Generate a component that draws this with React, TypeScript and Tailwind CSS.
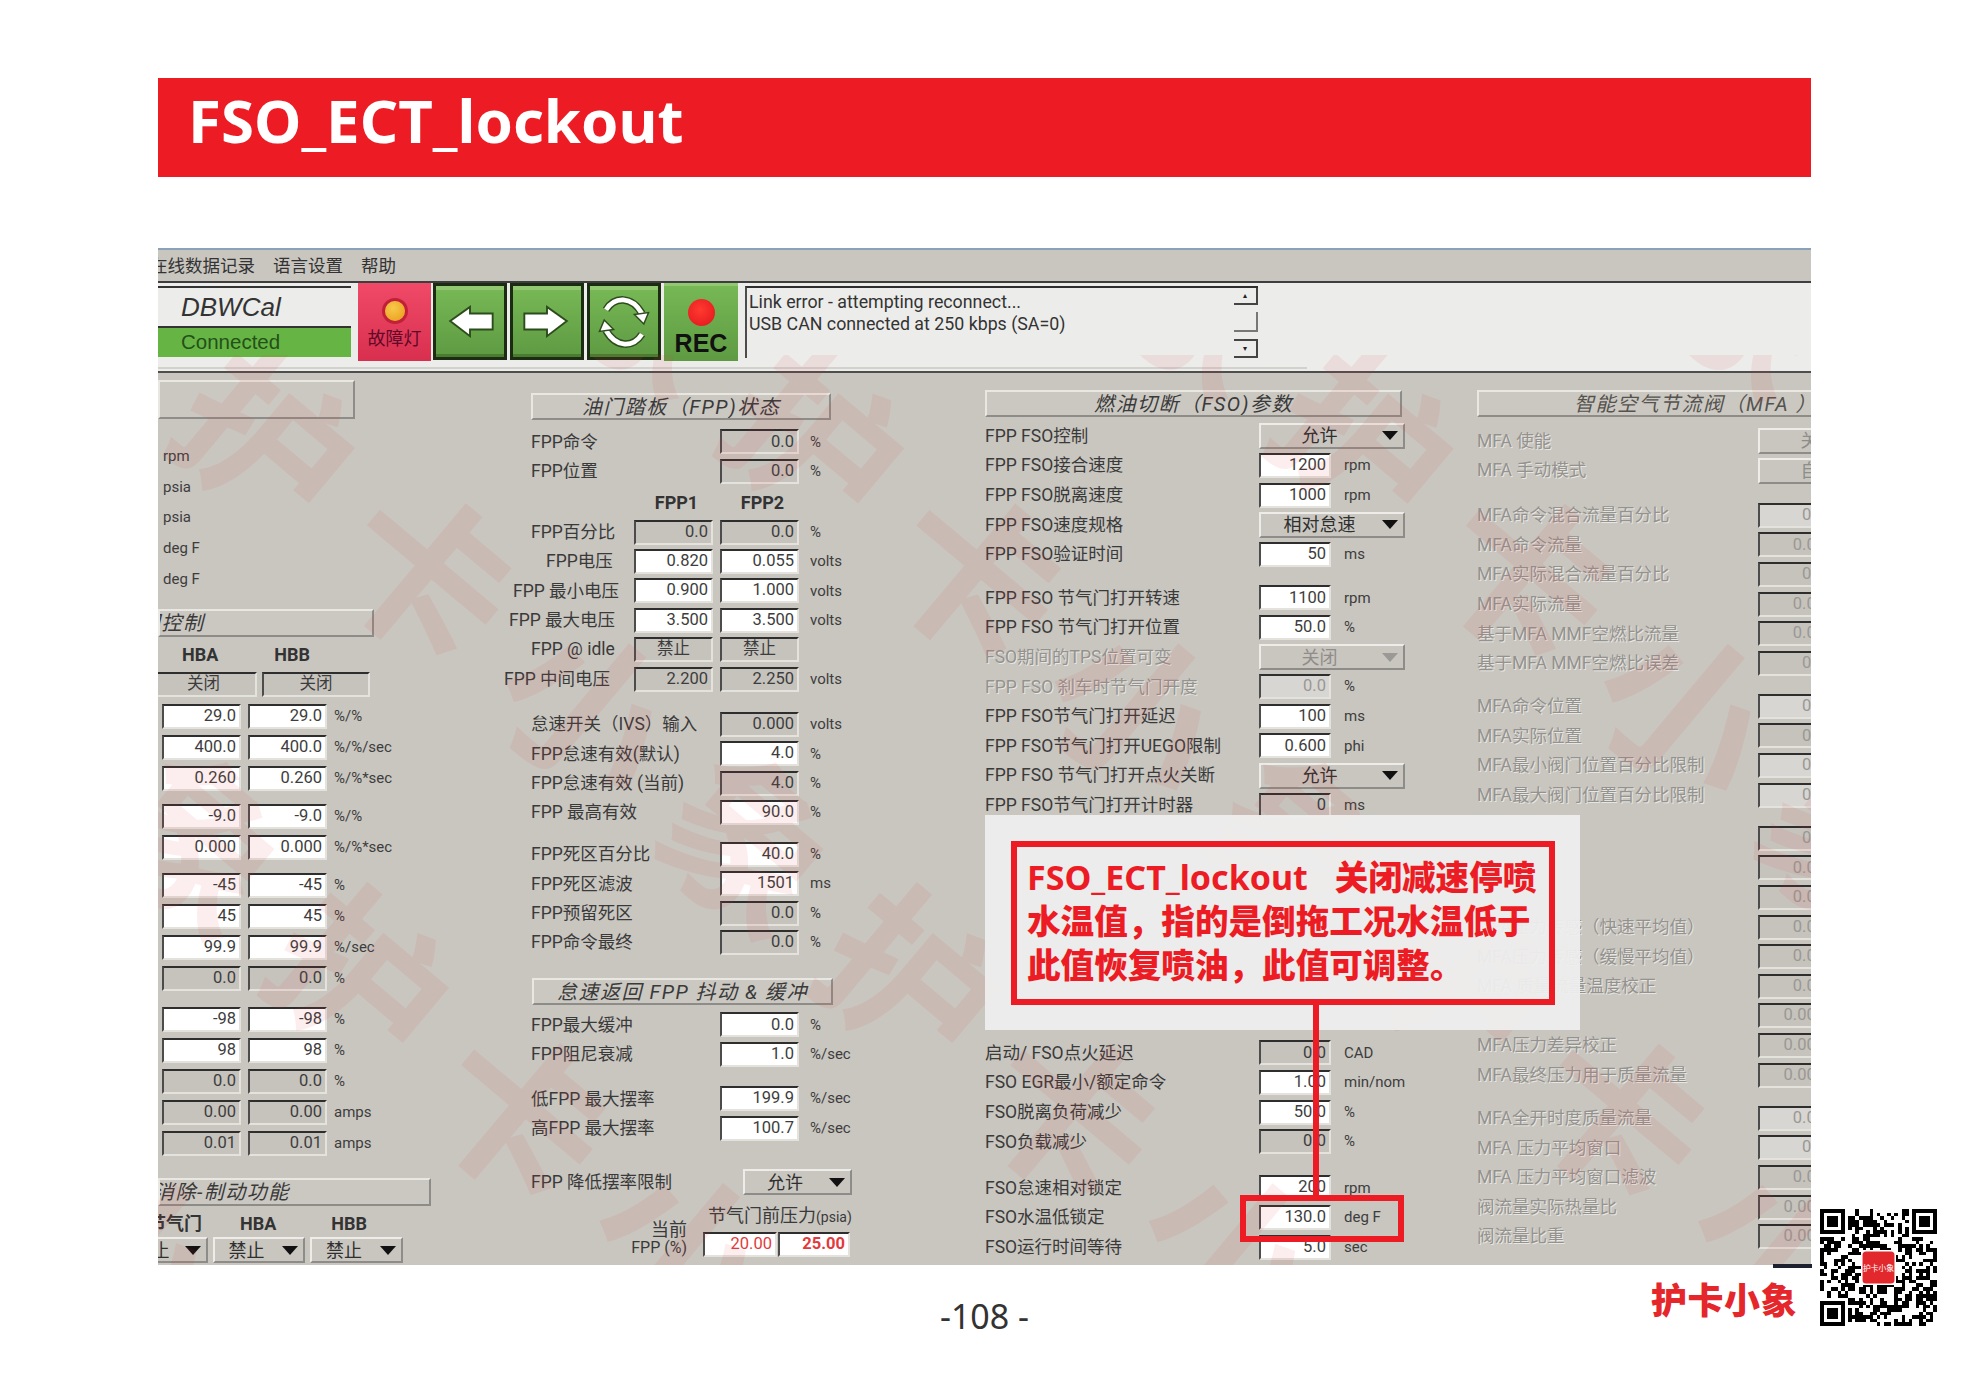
import React from "react";

type Cell = { label?: string; value?: string; unit?: string; ro?: boolean; light?: boolean; pick?: string; off?: boolean; gap?: string };

function Arrow({ off }: { off?: boolean }) {
	return (
		<svg viewBox="0 0 16 9" className="h-[9px] w-[16px] shrink-0">
			<polygon points="0,0 16,0 8,9" fill={off ? "#9b9995" : "#111"} />
		</svg>
	);
}

function Field({ value, ro, light, w = "w-[79px]", center, red, bold }: { value: React.ReactNode; ro?: boolean; light?: boolean; w?: string; center?: boolean; red?: boolean; bold?: boolean }) {
	return (
		<div
			className={`flex h-[25px] shrink-0 items-center overflow-hidden border-2 border-t-[#2e2e2e] border-r-[#e4e2dd] border-b-[#e4e2dd] border-l-[#4c4c4c] text-[16.5px] ${w} ${center ? "justify-center" : "justify-end pr-[3px]"} ${ro ? "bg-[#c6c3bd]" : light ? "bg-[#d8d6d2]" : "bg-white"} ${red ? "text-[#e23a3c]" : "text-[#3d3d3d]"} ${bold ? "font-bold" : ""}`}
		>
			{value}
		</div>
	);
}

function Pick({ value, w = "w-[146px]", off, extra = "" }: { value: string; w?: string; off?: boolean; extra?: string }) {
	return (
		<div
			className={`flex h-[26px] shrink-0 items-center overflow-hidden border-2 border-t-[#eeece8] border-r-[#8e8c88] border-b-[#8e8c88] border-l-[#eeece8] bg-[#c9c6c0] pr-[5px] text-[18px] ${w} ${extra} ${off ? "text-[#8f8d89]" : "text-[#2f2f2f]"}`}
		>
			<span className="flex-1 text-center whitespace-nowrap">{value}</span>
			<span className="w-[4px]" />
			<Arrow off={off} />
		</div>
	);
}

function Title({ children, extra }: { children: React.ReactNode; extra: string }) {
	return (
		<div
			className={`flex shrink-0 items-center overflow-hidden border-2 border-t-[#e9e7e2] border-r-[#8e8c88] border-b-[#8e8c88] border-l-[#e9e7e2] bg-[#cbc8c2] text-[20px] tracking-[1.5px] whitespace-nowrap text-[#3a3a3a] italic ${extra}`}
		>
			{children}
		</div>
	);
}

const hbRows: { a: string; u?: string; ro?: boolean; gap?: string }[] = [
	{ a: "29.0", u: "%/%", gap: "mt-[3.5px]" },
	{ a: "400.0", u: "%/%/sec" },
	{ a: "0.260", u: "%/%*sec" },
	{ a: "-9.0", u: "%/%", gap: "mt-[7px]" },
	{ a: "0.000", u: "%/%*sec" },
	{ a: "-45", u: "%", gap: "mt-[7px]" },
	{ a: "45", u: "%" },
	{ a: "99.9", u: "%/sec" },
	{ a: "0.0", u: "%", ro: true },
	{ a: "-98", u: "%", gap: "mt-[10px]" },
	{ a: "98", u: "%" },
	{ a: "0.0", u: "%", ro: true },
	{ a: "0.00", u: "amps", ro: true },
	{ a: "0.01", u: "amps", ro: true },
];

const fppRows: { label: string; pad: string; a: string; b: string; u?: string; ro?: boolean; text?: boolean }[] = [
	{ label: "FPP百分比", pad: "pl-[27px]", a: "0.0", b: "0.0", u: "%", ro: true },
	{ label: "FPP电压", pad: "pl-[42px]", a: "0.820", b: "0.055", u: "volts" },
	{ label: "FPP 最小电压", pad: "pl-[9px]", a: "0.900", b: "1.000", u: "volts" },
	{ label: "FPP 最大电压", pad: "pl-[5px]", a: "3.500", b: "3.500", u: "volts" },
	{ label: "FPP @ idle", pad: "pl-[27px]", a: "禁止", b: "禁止", ro: true, text: true },
	{ label: "FPP 中间电压", pad: "pl-0", a: "2.200", b: "2.250", u: "volts", ro: true },
];

const idleRows: Cell[] = [
	{ label: "怠速开关（IVS）输入", value: "0.000", unit: "volts", ro: true, gap: "mt-[16px]" },
	{ label: "FPP怠速有效(默认)", value: "4.0", unit: "%" },
	{ label: "FPP怠速有效 (当前)", value: "4.0", unit: "%", ro: true },
	{ label: "FPP 最高有效", value: "90.0", unit: "%" },
	{ label: "FPP死区百分比", value: "40.0", unit: "%", gap: "mt-[12.4px]" },
	{ label: "FPP死区滤波", value: "1501", unit: "ms" },
	{ label: "FPP预留死区", value: "0.0", unit: "%", ro: true },
	{ label: "FPP命令最终", value: "0.0", unit: "%", ro: true },
];

const fsoTop: Cell[] = [
	{ label: "FPP FSO控制", pick: "允许", gap: "mt-[4.2px]" },
	{ label: "FPP FSO接合速度", value: "1200", unit: "rpm" },
	{ label: "FPP FSO脱离速度", value: "1000", unit: "rpm" },
	{ label: "FPP FSO速度规格", pick: "相对怠速" },
	{ label: "FPP FSO验证时间", value: "50", unit: "ms" },
	{ label: "FPP FSO 节气门打开转速", value: "1100", unit: "rpm", gap: "mt-[14px]" },
	{ label: "FPP FSO 节气门打开位置", value: "50.0", unit: "%" },
	{ label: "FSO期间的TPS位置可变", pick: "关闭", off: true },
	{ label: "FPP FSO 刹车时节气门开度", value: "0.0", unit: "%", off: true, light: true },
	{ label: "FPP FSO节气门打开延迟", value: "100", unit: "ms" },
	{ label: "FPP FSO节气门打开UEGO限制", value: "0.600", unit: "phi" },
	{ label: "FPP FSO 节气门打开点火关断", pick: "允许" },
	{ label: "FPP FSO节气门打开计时器", value: "0", unit: "ms", ro: true },
];

const fsoBottom: Cell[] = [
	{ label: "启动/ FSO点火延迟", value: "0.0", unit: "CAD", ro: true, gap: "mt-[218.2px]" },
	{ label: "FSO EGR最小/额定命令", value: "1.00", unit: "min/nom" },
	{ label: "FSO脱离负荷减少", value: "50.0", unit: "%" },
	{ label: "FSO负载减少", value: "0.0", unit: "%", ro: true },
	{ label: "FSO怠速相对锁定", value: "200", unit: "rpm", gap: "mt-[16.6px]" },
	{ label: "FSO水温低锁定", value: "130.0", unit: "deg F" },
	{ label: "FSO运行时间等待", value: "5.0", unit: "sec" },
];

const mfaRows: Cell[] = [
	{ label: "MFA 使能", pick: "关闭", gap: "mt-[9.2px]" },
	{ label: "MFA 手动模式", pick: "自动" },
	{ label: "MFA命令混合流量百分比", value: "0.0", light: true, gap: "mt-[15.2px]" },
	{ label: "MFA命令流量", value: "0.00", ro: true },
	{ label: "MFA实际混合流量百分比", value: "0.0", ro: true },
	{ label: "MFA实际流量", value: "0.00", ro: true },
	{ label: "基于MFA MMF空燃比流量", value: "0.00", ro: true },
	{ label: "基于MFA MMF空燃比误差", value: "0.0", ro: true },
	{ label: "MFA命令位置", value: "0.0", light: true, gap: "mt-[13.4px]" },
	{ label: "MFA实际位置", value: "0.0", ro: true },
	{ label: "MFA最小阀门位置百分比限制", value: "0.0", light: true },
	{ label: "MFA最大阀门位置百分比限制", value: "0.0", light: true },
	{ label: "", value: "0.0", ro: true, gap: "mt-[13.6px]" },
	{ label: "", value: "0.00", ro: true },
	{ label: "", value: "0.00", ro: true },
	{ label: "MFA压力传感（快速平均值）", value: "0.00", ro: true },
	{ label: "MFA压力传感（缓慢平均值）", value: "0.00", ro: true },
	{ label: "MFA 质量流量温度校正", value: "0.00", ro: true },
	{ label: "", value: "0.000", ro: true },
	{ label: "MFA压力差异校正", value: "0.000", ro: true },
	{ label: "MFA最终压力用于质量流量", value: "0.000", ro: true },
	{ label: "MFA全开时度质量流量", value: "0.00", light: true, gap: "mt-[13.6px]" },
	{ label: "MFA 压力平均窗口", value: "0.0", light: true },
	{ label: "MFA 压力平均窗口滤波", value: "0.00", ro: true },
	{ label: "阀流量实际热量比", value: "0.000", ro: true },
	{ label: "阀流量比重", value: "0.000", ro: true },
];

function ValueRow({ row, labelW, fieldW, h = "h-[29.6px]", unitGap = "ml-[13px]", muted }: { row: Cell; labelW: string; fieldW: string; h?: string; unitGap?: string; muted?: boolean }) {
	const dim = row.off || muted;
	return (
		<div className={`flex shrink-0 items-center whitespace-nowrap ${h} ${row.gap ?? ""}`}>
			<div className={`shrink-0 text-[17.5px] ${labelW} ${dim ? "text-[#94928e] [text-shadow:1px_1px_0_#e8e6e2]" : "text-[#3a3a3a]"}`}>{row.label}</div>
			{row.pick ? (
				<Pick value={row.pick} off={dim} />
			) : (
				<Field value={<span className={dim ? "text-[#9a9894]" : ""}>{row.value}</span>} ro={row.ro} light={row.light} w={fieldW} />
			)}
			{row.unit && <span className={`text-[15px] text-[#3d3d3d] ${unitGap}`}>{row.unit}</span>}
		</div>
	);
}

function Qr() {
	const n = 33;
	const cells: React.ReactNode[] = [];
	let seed = 1337;
	for (let y = 0; y < n; y++) {
		for (let x = 0; x < n; x++) {
			seed = (seed * 1103515245 + 12345) & 0x7fffffff;
			const inFinder = (x < 8 && y < 8) || (x > n - 9 && y < 8) || (x < 8 && y > n - 9);
			if (!inFinder && (seed >> 16) % 100 < 50) {
				cells.push(<rect key={`${x}-${y}`} x={x} y={y} width="1" height="1" fill="#000" />);
			}
		}
	}
	const finder = (x: number, y: number) => (
		<g key={`f${x}${y}`}>
			<rect x={x} y={y} width="7" height="7" fill="#000" />
			<rect x={x + 1} y={y + 1} width="5" height="5" fill="#fff" />
			<rect x={x + 2} y={y + 2} width="3" height="3" fill="#000" />
		</g>
	);
	return (
		<svg viewBox="0 0 33 33" className="h-[117px] w-[117px]" shapeRendering="crispEdges">
			<rect width="33" height="33" fill="#fff" />
			{cells}
			{finder(0, 0)}
			{finder(26, 0)}
			{finder(0, 26)}
			<rect x="11.5" y="11.5" width="10" height="10" rx="1.2" fill="#fff" />
			<rect x="12" y="12" width="9" height="9" rx="1" fill="#e2282c" shapeRendering="auto" />
			<text x="16.5" y="17.4" textAnchor="middle" fontSize="2.2" fill="#fff" fontFamily="'Noto Sans CJK SC', serif">
				护卡小象
			</text>
		</svg>
	);
}

function GreenBtn({ children }: { children: React.ReactNode }) {
	return (
		<div className="flex h-[77px] w-[74px] shrink-0 items-center justify-center border-[3px] border-[#1b2c12] bg-[linear-gradient(#78b956,#5e9a42)] shadow-[inset_0_4px_0_#93c873,inset_0_-3px_0_#4a7c30]">
			{children}
		</div>
	);
}

const wmLine = "护卡小象护卡小象护卡小象护卡小象";

export default function App() {
	return (
		<div className="relative h-[1383px] w-[1969px] overflow-hidden bg-white [font-family:'Noto_Sans','Noto_Sans_CJK_SC',sans-serif]">
			<div className="px-[158px] pt-[78px]">
				{/* banner */}
				<div className="flex h-[99px] items-center bg-[#ed1c24] pb-[16px] pl-[30px] text-[60px] font-bold text-white">FSO_ECT_lockout</div>

				{/* screenshot */}
				<div className="relative mt-[71px] flex h-[1017px] flex-col overflow-hidden border-t-2 border-t-[#8ba1b9] bg-[#c9c6c0] [font-family:Roboto,'Noto_Sans_CJK_SC',sans-serif]">
					{/* menu */}
					<div className="flex h-[33px] shrink-0 items-center gap-[18px] border-b-2 border-b-[#3e3e3e] pt-[2px] text-[17.5px] text-[#333]">
						<span className="-ml-[8px]">在线数据记录</span>
						<span>语言设置</span>
						<span>帮助</span>
					</div>

					{/* toolbar */}
					<div className="flex h-[90px] shrink-0 flex-col border-b-2 border-b-[#4e4e4e] bg-[#ececea]">
						<div className="flex h-[80px] shrink-0 items-start">
							<div className="mt-[3px] flex h-[71px] w-[193px] shrink-0 flex-col text-[#333] [font-family:'Liberation_Sans',sans-serif]">
								<div className="flex h-[40px] items-center border-t-2 border-t-[#333] pl-[23px] text-[26px] italic">DBWCal</div>
								<div className="flex h-[31px] items-center border-t-2 border-t-[#333] bg-[#66b544] pl-[23px] text-[20.5px] text-[#24501a]">Connected</div>
							</div>
							<div className="ml-[7px] flex h-[78px] w-[73px] shrink-0 flex-col items-center bg-[linear-gradient(#f04a68,#d92f4f)]">
								<div className="mt-[18px] size-[20px] rounded-full bg-[radial-gradient(circle_at_40%_35%,#f8c84a,#e89a18)] shadow-[0_0_0_3px_#c02038]" />
								<div className="mt-[6px] text-[18px] leading-[24px] text-[#5e0a28]">故障灯</div>
							</div>
							<div className="ml-[2px] flex gap-[3px]">
								<GreenBtn>
									<svg viewBox="0 0 72 72" className="size-[68px]">
										<polygon points="15,35 36,20 36,27 60,27 60,44 36,44 36,51" fill="#fff" stroke="#2d4c1c" strokeWidth="2" />
									</svg>
								</GreenBtn>
								<GreenBtn>
									<svg viewBox="0 0 72 72" className="size-[68px]">
										<polygon points="57,35 36,20 36,27 12,27 12,44 36,44 36,51" fill="#fff" stroke="#2d4c1c" strokeWidth="2" />
									</svg>
								</GreenBtn>
								<GreenBtn>
									<svg viewBox="0 0 72 72" className="size-[68px]">
										<path d="M17 23C26 9 44 8 55 27" fill="none" stroke="#2d4c1c" strokeWidth="8" />
										<path d="M17 23C26 9 44 8 55 27" fill="none" stroke="#fff" strokeWidth="5" />
										<polygon points="47,28 62,26 57,38" fill="#fff" stroke="#2d4c1c" strokeWidth="1.5" />
										<path d="M55 49C46 63 28 64 17 45" fill="none" stroke="#2d4c1c" strokeWidth="8" />
										<path d="M55 49C46 63 28 64 17 45" fill="none" stroke="#fff" strokeWidth="5" />
										<polygon points="25,44 10,46 15,34" fill="#fff" stroke="#2d4c1c" strokeWidth="1.5" />
									</svg>
								</GreenBtn>
								<div className="flex h-[78px] w-[74px] shrink-0 flex-col items-center bg-[linear-gradient(#78b956,#5e9a42)] shadow-[inset_0_3px_0_#93c873]">
									<div className="mt-[16px] size-[27px] rounded-full bg-[radial-gradient(circle_at_45%_40%,#ff3a30,#e0141c)]" />
									<div className="mt-[3px] text-[25px] leading-[29px] font-bold text-[#111] [font-family:'Liberation_Sans',sans-serif]">REC</div>
								</div>
							</div>
							<div className="mt-[3px] ml-[7px] flex h-[72px] w-[513px] shrink-0 border-t-2 border-l-2 border-t-[#2e2e2e] border-l-[#4c4c4c]">
								<div className="flex-1 pt-[3px] pl-[2px] text-[17.8px] leading-[22px] text-[#333]">
									<div>Link error - attempting reconnect...</div>
									<div>USB CAN connected at 250 kbps (SA=0)</div>
								</div>
								<div className="flex w-[24px] shrink-0 flex-col justify-between">
									<div className="flex h-[17px] items-center justify-center border-r-2 border-b-2 border-r-[#444] border-b-[#444] text-[8px] text-[#222]">▴</div>
									<div className="h-[20px] border-r-2 border-b-2 border-r-[#777] border-b-[#777]" />
									<div className="flex h-[19px] items-center justify-center border-t-2 border-r-2 border-b-2 border-t-[#444] border-r-[#444] border-b-[#444] text-[8px] text-[#222]">▾</div>
								</div>
							</div>
						</div>
						<div className="mt-[4px] h-[2px] w-[1149px] bg-[#d3d1cc]" />
					</div>

					{/* parameter columns */}
					<div className="flex min-h-0 flex-1">
						{/* HB control, clipped on the left */}
						<div className="flex w-[346px] shrink-0 flex-col">
							<Title extra="mt-[7px] h-[39px] w-[197px]">
								<span />
							</Title>
							{["rpm", "psia", "psia", "deg F", "deg F"].map((u, i) => (
								<div key={i} className={`flex h-[30.8px] shrink-0 items-center pl-[5px] text-[15px] text-[#3d3d3d] ${i === 0 ? "mt-[21.6px]" : ""}`}>
									{u}
								</div>
							))}
							<Title extra="mt-[14.6px] h-[28px] w-[216px]">
								<span className="-ml-[20px]">门控制</span>
							</Title>
							<div className="mt-[5px] flex h-[24px] shrink-0 items-center text-[18px] font-bold text-[#333]">
								<span className="ml-[24px]">HBA</span>
								<span className="ml-[56px]">HBB</span>
							</div>
							<div className="mt-[6px] flex shrink-0 gap-[5px]">
								<Field value="关闭" w="-ml-[8px] w-[107px]" center ro />
								<Field value="关闭" w="w-[108px]" center ro />
							</div>
							{hbRows.map((r, i) => (
								<div key={i} className={`flex h-[31px] shrink-0 items-center gap-[7px] pl-[4px] ${r.gap ?? ""}`}>
									<Field value={r.a} ro={r.ro} />
									<Field value={r.a} ro={r.ro} />
									<span className="text-[15px] text-[#3d3d3d]">{r.u}</span>
								</div>
							))}
							<Title extra="mt-[19.5px] h-[28px] w-[273px]">
								<span className="-ml-[6px]">消除-制动功能</span>
							</Title>
							<div className="mt-[5px] flex h-[24px] shrink-0 items-center text-[18px] font-bold text-[#333]">
								<span className="-ml-[10px]">节气门</span>
								<span className="ml-[38px]">HBA</span>
								<span className="ml-[55px]">HBB</span>
							</div>
							<div className="mt-[2px] flex shrink-0 gap-[5px]">
								<Pick value="禁止" w="w-[88px]" extra="-ml-[38px]" />
								<Pick value="禁止" w="w-[92px]" />
								<Pick value="禁止" w="w-[93px]" />
							</div>
						</div>

						{/* FPP */}
						<div className="flex w-[481px] shrink-0 flex-col">
							<Title extra="mt-[20px] ml-[27px] h-[27px] w-[300px] justify-center">油门踏板（FPP)状态</Title>
							<ValueRow row={{ label: "FPP命令", value: "0.0", unit: "%", ro: true, gap: "mt-[7.2px] pl-[27px]" }} labelW="w-[189px]" fieldW="w-[79px]" h="h-[29.4px]" unitGap="ml-[11px]" />
							<ValueRow row={{ label: "FPP位置", value: "0.0", unit: "%", ro: true, gap: "pl-[27px]" }} labelW="w-[189px]" fieldW="w-[79px]" h="h-[29.4px]" unitGap="ml-[11px]" />
							<div className="mt-[2px] flex h-[29.4px] shrink-0 items-center gap-[7px] pl-[133px] text-[18px] font-bold text-[#333]">
								<span className="w-[79px] text-center">FPP1</span>
								<span className="w-[79px] text-center">FPP2</span>
							</div>
							{fppRows.map((r) => (
								<div key={r.label} className="flex h-[29.4px] shrink-0 items-center whitespace-nowrap">
									<div className={`w-[130px] shrink-0 text-[17.5px] text-[#3a3a3a] ${r.pad}`}>{r.label}</div>
									<div className="flex gap-[7px]">
										<Field value={r.a} ro={r.ro} center={r.text} />
										<Field value={r.b} ro={r.ro} center={r.text} />
									</div>
									{r.u && <span className="ml-[11px] text-[15px] text-[#3d3d3d]">{r.u}</span>}
								</div>
							))}
							{idleRows.map((r) => (
								<ValueRow key={r.label} row={{ ...r, gap: `pl-[27px] ${r.gap ?? ""}` }} labelW="w-[189px]" fieldW="w-[79px]" h="h-[29.4px]" unitGap="ml-[11px]" />
							))}
							<Title extra="mt-[21px] ml-[28px] h-[27px] w-[301px] justify-center">怠速返回 FPP 抖动 & 缓冲</Title>
							<ValueRow row={{ label: "FPP最大缓冲", value: "0.0", unit: "%", gap: "mt-[5px] pl-[27px]" }} labelW="w-[189px]" fieldW="w-[79px]" h="h-[29.4px]" unitGap="ml-[11px]" />
							<ValueRow row={{ label: "FPP阻尼衰减", value: "1.0", unit: "%/sec", gap: "pl-[27px]" }} labelW="w-[189px]" fieldW="w-[79px]" h="h-[29.4px]" unitGap="ml-[11px]" />
							<ValueRow row={{ label: "低FPP 最大摆率", value: "199.9", unit: "%/sec", gap: "mt-[15px] pl-[27px]" }} labelW="w-[189px]" fieldW="w-[79px]" h="h-[29.4px]" unitGap="ml-[11px]" />
							<ValueRow row={{ label: "高FPP 最大摆率", value: "100.7", unit: "%/sec", gap: "pl-[27px]" }} labelW="w-[189px]" fieldW="w-[79px]" h="h-[29.4px]" unitGap="ml-[11px]" />
							<div className="mt-[25px] flex h-[29.4px] shrink-0 items-center pl-[27px] text-[17.5px] whitespace-nowrap text-[#3a3a3a]">
								<div className="w-[212px] shrink-0">FPP 降低摆率限制</div>
								<Pick value="允许" w="w-[109px]" />
							</div>
							<div className="mt-[7px] flex shrink-0 items-end">
								<div className="flex w-[183px] flex-col items-end text-[18px] leading-[18px] text-[#3a3a3a]">
									<span>当前</span>
									<span className="text-[16px]">FPP (%)</span>
								</div>
								<div className="ml-[16px] flex flex-col">
									<div className="mb-[3px] ml-[5px] text-[18px] leading-[24px] whitespace-nowrap text-[#3a3a3a]">
										节气门前压力<span className="text-[14px]">(psia)</span>
									</div>
									<div className="flex gap-[1px]">
										<Field value="20.00" w="w-[74px]" red />
										<Field value="25.00" w="w-[72px]" red bold />
									</div>
								</div>
							</div>
						</div>

						{/* FSO */}
						<div className="flex w-[492px] shrink-0 flex-col">
							<Title extra="mt-[17px] h-[27px] w-[417px] justify-center">燃油切断（FSO)参数</Title>
							{[...fsoTop, ...fsoBottom].map((r) => (
								<ValueRow key={r.label} row={r} labelW="w-[274px]" fieldW="w-[72px]" />
							))}
						</div>

						{/* MFA, greyed and clipped on the right */}
						<div className="flex w-[335px] shrink-0 flex-col">
							<Title extra="mt-[17px] h-[27px] w-[400px] pl-[95px] text-[#55534f]">智能空气节流阀（MFA ）/</Title>
							{mfaRows.map((r, i) => (
								<ValueRow key={i} row={r} labelW="w-[281px]" fieldW="w-[72px]" muted />
							))}
						</div>
					</div>

					{/* watermark */}
					<div className="pointer-events-none absolute inset-x-0 top-[105px] bottom-0 overflow-hidden">
						<div className="absolute top-[-57px] left-[1875px] origin-top-left rotate-[40deg] text-[170px] leading-[353px] font-bold tracking-[40px] whitespace-nowrap text-[#e04646]/[0.09] [font-family:'Noto_Sans_CJK_SC',sans-serif]">
							<div className="-ml-[1765px]">{wmLine}</div>
							<div className="-ml-[2186px]">{wmLine}</div>
							<div className="-ml-[1767px]">{wmLine}</div>
							<div className="-ml-[2188px]">{wmLine}</div>
							<div className="-ml-[1769px]">{wmLine}</div>
							<div className="-ml-[2190px]">{wmLine}</div>
							<div className="-ml-[1771px]">{wmLine}</div>
						</div>
					</div>

					{/* callout */}
					<div className="absolute top-[565px] left-[827px] h-[215px] w-[595px] bg-[#eeeeee]/95">
						<div className="absolute top-[26px] left-[26px] h-[164px] w-[544px] border-[6px] border-[#ed1c24] pt-[8px] pl-[10px] text-[33.6px] leading-[44px] font-black whitespace-nowrap text-[#ed1c24] [font-family:'Noto_Sans','Noto_Sans_CJK_SC',sans-serif]">
							<div>
								<span className="text-[34px] font-bold">FSO_ECT_lockout</span>
								<span className="ml-[27px]">关闭减速停喷</span>
							</div>
							<div>水温值，指的是倒拖工况水温低于</div>
							<div>此值恢复喷油，此值可调整。</div>
						</div>
					</div>
					<div className="absolute top-[755px] left-[1155px] h-[193px] w-[6px] bg-[#ed1c24]" />
					<div className="absolute top-[945px] left-[1082px] h-[47px] w-[164px] border-[6px] border-[#ed1c24]" />
				</div>

				{/* page number + brand */}
				<div className="mt-[10px] grid grid-cols-[1fr_auto_1fr] items-start">
					<div />
					<div className="mt-[18px] text-[34px] leading-[46px] text-[#333]">-108 -</div>
					<div className="mt-[1px] justify-self-end pr-[14px] text-[36px] leading-[44px] font-black tracking-[0.5px] text-[#e5262a] [font-family:'Noto_Sans_CJK_SC',sans-serif]">护卡小象</div>
				</div>
			</div>

			<div className="absolute top-[1264px] left-[1773px] h-[4px] w-[39px] bg-[#1e2230]" />
			<div className="absolute top-[1209px] left-[1820px]">
				<Qr />
			</div>
		</div>
	);
}
